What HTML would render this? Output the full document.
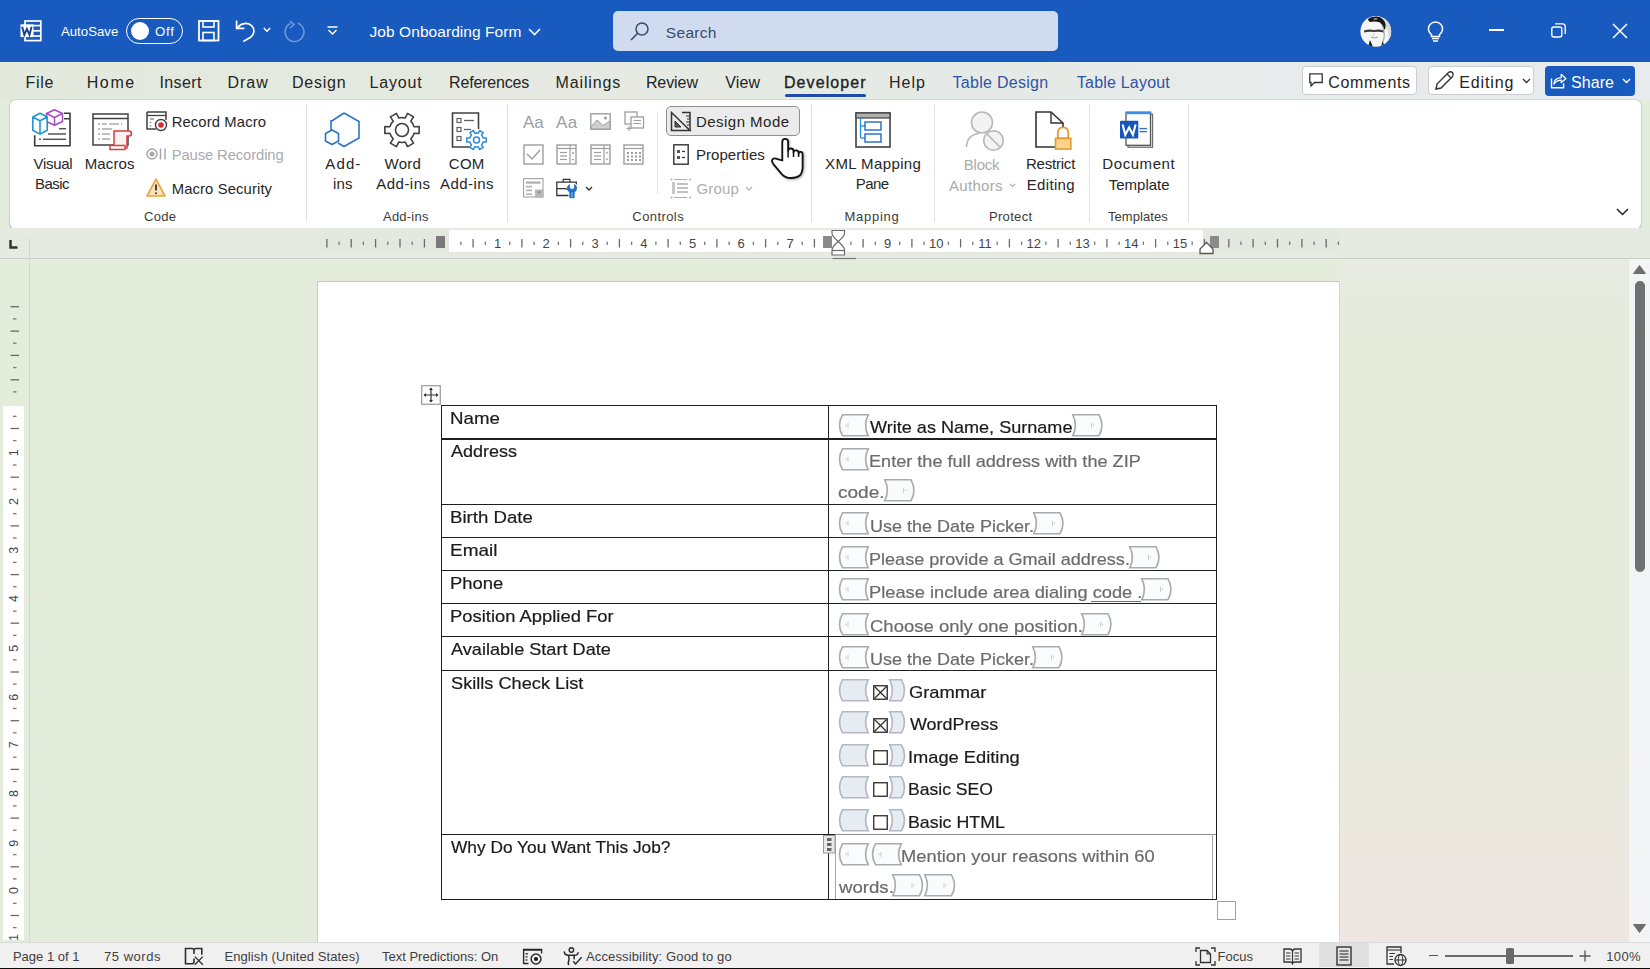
<!DOCTYPE html><html><head><meta charset="utf-8"><style>
html,body{margin:0;padding:0;width:1650px;height:969px;overflow:hidden;background:#E4ECDC;font-family:"Liberation Sans", sans-serif;}
.t{position:absolute;white-space:pre;line-height:1;font-family:"Liberation Sans", sans-serif;}
svg{overflow:visible}
</style></head><body>
<div style="position:absolute;left:0px;top:258px;width:1650px;height:684px;background:#E4ECDC;"></div><div style="position:absolute;left:1339px;top:258px;width:311px;height:684px;background:linear-gradient(180deg,#E8EBE3 0%,#E6EBDC 12%,#E6EBDB 50%,#E8E9DD 72%,#ECE7E0 88%,#EEE6E2 100%);"></div><div style="position:absolute;left:0px;top:0px;width:1650px;height:62px;background:#185ABD;"></div><svg style="position:absolute;left:20px;top:20px;" width="22" height="22" viewBox="0 0 22 22"><rect x="5" y="1" width="15.8" height="19.6" fill="none" stroke="#fff" stroke-width="1.7"/><line x1="13" y1="5.6" x2="20.8" y2="5.6" stroke="#fff" stroke-width="1.7"/><line x1="13" y1="10.8" x2="20.8" y2="10.8" stroke="#fff" stroke-width="1.7"/><line x1="13" y1="16" x2="20.8" y2="16" stroke="#fff" stroke-width="1.7"/><rect x="0.5" y="4.3" width="13" height="12.8" fill="#fff"/><path d="M2.2 6.8 L4.3 14.8 L6.9 8.8 L9.5 14.8 L11.6 6.8" fill="none" stroke="#1B3E8C" stroke-width="1.9" stroke-linejoin="miter"/></svg><div class="t" style="left:60.97px;top:25px;font-size:13.2px;color:#fff;letter-spacing:0.01px;">AutoSave</div><div style="position:absolute;left:125.5px;top:17.8px;width:55.5px;height:24.5px;border:1.8px solid #fff;border-radius:13px;"></div><div style="position:absolute;left:130.5px;top:22px;width:18px;height:18px;background:#fff;border-radius:50%;"></div><div class="t" style="left:155.07px;top:25px;font-size:13.2px;color:#fff;letter-spacing:0.768px;">Off</div><svg style="position:absolute;left:198px;top:20px;" width="22" height="22" viewBox="0 0 22 22"><rect x="1" y="1" width="19.5" height="19.5" fill="none" stroke="#fff" stroke-width="1.8"/><rect x="5" y="1" width="11" height="6" fill="none" stroke="#fff" stroke-width="1.6"/><rect x="5" y="12.5" width="11" height="8" fill="none" stroke="#fff" stroke-width="1.6"/></svg><svg style="position:absolute;left:235px;top:20px;" width="22" height="23" viewBox="0 0 22 23"><path d="M1.6 0.6 V8.4 H9.4" fill="none" stroke="#fff" stroke-width="1.7"/><path d="M2.2 8.2 C5.8 2.8 12.8 2 16.8 5.8 C20.5 9.5 19.2 13.8 16 17 L8.3 21.6" fill="none" stroke="#fff" stroke-width="1.7"/></svg><svg style="position:absolute;left:263px;top:27px;" width="8" height="6" viewBox="0 0 8 6"><path d="M0.8 1 L4 4.2 L7.2 1" fill="none" stroke="#fff" stroke-width="1.4"/></svg><svg style="position:absolute;left:283px;top:20px;" width="23" height="22" viewBox="0 0 23 22"><circle cx="11.5" cy="12" r="9.5" fill="none" stroke="#6E9BE0" stroke-width="1.6" stroke-dasharray="52 8" transform="rotate(-70 11.5 12)"/><path d="M7 1 L11 4.5 L7 8" fill="none" stroke="#6E9BE0" stroke-width="1.6"/></svg><svg style="position:absolute;left:327px;top:26px;" width="11" height="10" viewBox="0 0 11 10"><line x1="0.5" y1="1" x2="10.5" y2="1" stroke="#fff" stroke-width="1.5"/><path d="M1.5 4 L5.5 8 L9.5 4" fill="none" stroke="#fff" stroke-width="1.5"/></svg><div class="t" style="left:369.57px;top:24px;font-size:15.5px;color:#fff;letter-spacing:0.059px;">Job Onboarding Form</div><svg style="position:absolute;left:528px;top:28px;" width="13" height="8" viewBox="0 0 13 8"><path d="M1 1 L6.5 6.5 L12 1" fill="none" stroke="#fff" stroke-width="1.6"/></svg><div style="position:absolute;left:613px;top:11px;width:445px;height:40px;background:#D0DBEF;border-radius:5px;"></div><svg style="position:absolute;left:630px;top:22px;" width="20" height="19" viewBox="0 0 20 19"><circle cx="12" cy="7" r="6" fill="none" stroke="#3B4A66" stroke-width="1.5"/><line x1="7.5" y1="11.5" x2="1" y2="18" stroke="#3B4A66" stroke-width="1.6"/></svg><div class="t" style="left:665.80px;top:25px;font-size:15.5px;color:#3C4A6B;letter-spacing:0.314px;">Search</div><svg style="position:absolute;left:1360px;top:15.5px;filter:blur(0.35px)" width="32" height="31" viewBox="0 0 32 31"><defs><clipPath id="avc"><circle cx="15.8" cy="15.4" r="15.4"/></clipPath></defs><circle cx="15.8" cy="15.4" r="15.4" fill="#F7F7F7"/><g clip-path="url(#avc)"><path d="M24 8 Q30 14 28 26 L32 31 V0 H24 Z" fill="#D9D9DC"/><path d="M8 3 Q11 0 17 0.5 Q24 1.5 25.5 8 Q26 12 24.5 14 Q23 9 20 6.5 Q15 5 10 6 Q8 5 8 3 Z" fill="#161616"/><ellipse cx="15.5" cy="3" rx="2.2" ry="1.1" fill="#8a8a8a"/><path d="M4 14.5 Q9 12.8 14 14 Q19 13 24 14.5 V16.5 Q19 15.3 14 16 Q9 15.2 4 16.5 Z" fill="#3d3d3d"/><path d="M11 21 Q14 23 18 21" fill="none" stroke="#9a9a9a" stroke-width="1"/><path d="M14 17 L13 20" stroke="#bdbdbd" stroke-width="0.8"/><path d="M8 31 L10 24 L13 31 Z" fill="#1f1f1f"/><path d="M21 31 L22.5 25 L25 31 Z" fill="#2a2a2a"/><path d="M22 9 Q26 18 23 26" fill="none" stroke="#a5a5a5" stroke-width="1.2"/></g></svg><svg style="position:absolute;left:1427px;top:21px;" width="17" height="21" viewBox="0 0 17 21"><path d="M4.5 13.5 C1 11 0.5 6.5 3 3.5 C6 0.2 11 0.2 14 3.5 C16.5 6.5 16 11 12.5 13.5 V15.5 H4.5 Z" fill="none" stroke="#fff" stroke-width="1.5"/><line x1="5" y1="17.5" x2="12" y2="17.5" stroke="#fff" stroke-width="1.5"/><line x1="6" y1="20" x2="11" y2="20" stroke="#fff" stroke-width="1.5"/></svg><div style="position:absolute;left:1488.5px;top:29.2px;width:15px;height:1.8px;background:#fff;"></div><svg style="position:absolute;left:1551px;top:23px;" width="15" height="15" viewBox="0 0 15 15"><rect x="0.8" y="4" width="10" height="10" rx="2" fill="none" stroke="#fff" stroke-width="1.4"/><path d="M4 0.9 H11.5 Q14.2 0.9 14.2 3.6 V11" fill="none" stroke="#fff" stroke-width="1.4"/></svg><svg style="position:absolute;left:1612px;top:23px;" width="16" height="16" viewBox="0 0 16 16"><path d="M1 1 L15 15 M15 1 L1 15" stroke="#fff" stroke-width="1.5"/></svg><div style="position:absolute;left:0px;top:62px;width:1650px;height:38px;background:linear-gradient(90deg,#E3E9DC 0%,#E6EAE4 45%,#E7EBEE 100%);"></div><div class="t" style="left:25.38px;top:75px;font-size:16px;color:#242424;letter-spacing:0.78px;">File</div><div class="t" style="left:86.68px;top:75px;font-size:16px;color:#242424;letter-spacing:1.64px;">Home</div><div class="t" style="left:159.52px;top:75px;font-size:16px;color:#242424;letter-spacing:0.38px;">Insert</div><div class="t" style="left:227.38px;top:75px;font-size:16px;color:#242424;letter-spacing:1.007px;">Draw</div><div class="t" style="left:291.98px;top:75px;font-size:16px;color:#242424;letter-spacing:0.784px;">Design</div><div class="t" style="left:369.38px;top:75px;font-size:16px;color:#242424;letter-spacing:0.86px;">Layout</div><div class="t" style="left:449.08px;top:75px;font-size:16px;color:#242424;letter-spacing:-0.196px;">References</div><div class="t" style="left:555.48px;top:75px;font-size:16px;color:#242424;letter-spacing:0.886px;">Mailings</div><div class="t" style="left:645.88px;top:75px;font-size:16px;color:#242424;letter-spacing:-0.08px;">Review</div><div class="t" style="left:725.32px;top:75px;font-size:16px;color:#242424;letter-spacing:0.08px;">View</div><div class="t" style="left:783.98px;top:75px;font-size:16px;color:#1f1f1f;letter-spacing:1.08px;-webkit-text-stroke:0.35px #1f1f1f;">Developer</div><div style="position:absolute;left:785px;top:93.5px;width:81px;height:3px;background:#1F4CA8;border-radius:2px;"></div><div class="t" style="left:888.98px;top:75px;font-size:16px;color:#242424;letter-spacing:0.993px;">Help</div><div class="t" style="left:952.54px;top:75px;font-size:16px;color:#2F54A6;letter-spacing:0.289px;">Table Design</div><div class="t" style="left:1076.84px;top:75px;font-size:16px;color:#2F54A6;letter-spacing:0.205px;">Table Layout</div><div style="position:absolute;left:1302px;top:66px;width:115px;height:29px;background:#fff;border:1px solid #C9CDD0;border-radius:4px;box-sizing:border-box;"></div><svg style="position:absolute;left:1309px;top:73px;" width="14" height="15" viewBox="0 0 14 15"><path d="M0.8 0.8 H13.2 V9.5 H5.5 L2 13 V9.5 H0.8 Z" fill="none" stroke="#333" stroke-width="1.3"/></svg><div class="t" style="left:1328.20px;top:75px;font-size:16px;color:#242424;letter-spacing:0.643px;">Comments</div><div style="position:absolute;left:1428px;top:66px;width:106px;height:29px;background:#fff;border:1px solid #C9CDD0;border-radius:4px;box-sizing:border-box;"></div><svg style="position:absolute;left:1434px;top:70px;" width="21" height="21" viewBox="0 0 21 21"><path d="M2 19 L3 14 L14.5 2.5 Q16.5 0.8 18.5 2.5 Q20 4.5 18.5 6.5 L7 18 Z" fill="none" stroke="#333" stroke-width="1.4"/><line x1="13" y1="4" x2="17" y2="8" stroke="#333" stroke-width="1.3"/></svg><div class="t" style="left:1459.18px;top:75px;font-size:16px;color:#242424;letter-spacing:0.883px;">Editing</div><svg style="position:absolute;left:1521.5px;top:78px;" width="9" height="6" viewBox="0 0 9 6"><path d="M1 1 L4.5 4.5 L8 1" fill="none" stroke="#333" stroke-width="1.3"/></svg><div style="position:absolute;left:1545px;top:66px;width:90px;height:30px;background:#185ABD;border-radius:4px;"></div><svg style="position:absolute;left:1550px;top:73px;" width="17" height="16" viewBox="0 0 17 16"><path d="M1.5 5.5 V14.8 H13.6 V10.2" fill="none" stroke="#fff" stroke-width="1.4"/><path d="M3.8 11.2 Q4 5.2 11.2 4.6 V1.3 L15.9 5.8 L11.2 9.6 V7.2 Q6.6 7.2 3.8 11.2 Z" fill="none" stroke="#fff" stroke-width="1.25" stroke-linejoin="round"/></svg><div class="t" style="left:1571.08px;top:75px;font-size:16px;color:#fff;letter-spacing:0.03px;">Share</div><svg style="position:absolute;left:1621.5px;top:78px;" width="9" height="6" viewBox="0 0 9 6"><path d="M1 1 L4.5 4.5 L8 1" fill="none" stroke="#fff" stroke-width="1.4"/></svg><div style="position:absolute;left:10px;top:100px;width:1631px;height:129px;background:#fff;border-radius:6px;box-shadow:0 1px 1.5px rgba(0,0,0,0.22),0 0 0 1px rgba(0,0,0,0.07);"></div><div style="position:absolute;left:305.5px;top:104px;width:1px;height:118px;background:#E1E1E1;"></div><div style="position:absolute;left:506.5px;top:104px;width:1px;height:118px;background:#E1E1E1;"></div><div style="position:absolute;left:810.5px;top:104px;width:1px;height:118px;background:#E1E1E1;"></div><div style="position:absolute;left:934px;top:104px;width:1px;height:118px;background:#E1E1E1;"></div><div style="position:absolute;left:1088.5px;top:104px;width:1px;height:118px;background:#E1E1E1;"></div><div style="position:absolute;left:1188px;top:104px;width:1px;height:118px;background:#E1E1E1;"></div><div class="t" style="left:144.05px;top:210px;font-size:13px;color:#3b3b3b;letter-spacing:0.311px;">Code</div><div class="t" style="left:382.97px;top:210px;font-size:13px;color:#3b3b3b;letter-spacing:0.236px;">Add-ins</div><div class="t" style="left:632.35px;top:210px;font-size:13px;color:#3b3b3b;letter-spacing:0.411px;">Controls</div><div class="t" style="left:844.53px;top:210px;font-size:13px;color:#3b3b3b;letter-spacing:0.738px;">Mapping</div><div class="t" style="left:988.93px;top:210px;font-size:13px;color:#3b3b3b;letter-spacing:0.332px;">Protect</div><div class="t" style="left:1108.01px;top:210px;font-size:13px;color:#3b3b3b;letter-spacing:0.062px;">Templates</div><svg style="position:absolute;left:1615.5px;top:207.5px;" width="13" height="8" viewBox="0 0 13 8"><path d="M1 1 L6.5 6.5 L12 1" fill="none" stroke="#222" stroke-width="1.5"/></svg><svg style="position:absolute;left:32px;top:109px;" width="40" height="38" viewBox="0 0 40 38"><path d="M32 4.3 H38 V36.7 H2.7 V26.3" fill="none" stroke="#3a3a3a" stroke-width="1.6"/>
<line x1="32" y1="9.7" x2="38" y2="9.7" stroke="#3a3a3a" stroke-width="1.5"/>
<line x1="27" y1="19.7" x2="34" y2="19.7" stroke="#555" stroke-width="1.5"/>
<line x1="16" y1="25" x2="34" y2="25" stroke="#555" stroke-width="1.5"/>
<line x1="7" y1="30.3" x2="9" y2="30.3" stroke="#B03A7A" stroke-width="1.5"/>
<line x1="11" y1="30.3" x2="34" y2="30.3" stroke="#555" stroke-width="1.5"/>
<path d="M14.5 4.5 L22.5 0.8 L30.5 4.5 V12.5 L22.5 16.3 L14.5 12.5 Z M14.5 4.5 L22.5 8.5 L30.5 4.5 M22.5 8.5 V16.3" fill="#fff" stroke="#A94BBE" stroke-width="1.5" stroke-linejoin="round"/>
<path d="M0.8 8 L8 4.2 L15.2 8 V21.3 L8 25.1 L0.8 21.3 Z M0.8 8 L8 11.8 L15.2 8 M8 11.8 V25.1" fill="#fff" stroke="#1E95D6" stroke-width="1.6" stroke-linejoin="round"/></svg><div class="t" style="left:33.42px;top:156px;font-size:15px;color:#262626;letter-spacing:-0.257px;">Visual</div><div class="t" style="left:34.96px;top:176px;font-size:15px;color:#262626;letter-spacing:-0.556px;">Basic</div><svg style="position:absolute;left:92px;top:113px;" width="40" height="38" viewBox="0 0 40 38"><rect x="1" y="1" width="35" height="31" fill="none" stroke="#404040" stroke-width="1.5"/>
<line x1="1" y1="5.5" x2="36" y2="5.5" stroke="#404040" stroke-width="1.5"/>
<line x1="6" y1="11" x2="30" y2="11" stroke="#808080" stroke-width="1.2" stroke-dasharray="2 2 5 2 8 0"/>
<line x1="6" y1="16" x2="20" y2="16" stroke="#808080" stroke-width="1.2" stroke-dasharray="2 2 8 0"/>
<line x1="6" y1="21" x2="20" y2="21" stroke="#808080" stroke-width="1.2" stroke-dasharray="2 2 6 0"/>
<line x1="6" y1="26" x2="18" y2="26" stroke="#808080" stroke-width="1.2" stroke-dasharray="2 2 6 0"/>
<path d="M22 18 H37 Q39.5 18 39.5 20.5 Q39.5 23 37 23 H35 V35 H20 V32.5 H22 Z" fill="#FDF1F1" stroke="#D83B3B" stroke-width="1.5"/>
<path d="M18 32.5 H33 V36.5 H18 Z" fill="#fff" stroke="#D83B3B" stroke-width="1.4"/></svg><div class="t" style="left:84.76px;top:156px;font-size:15px;color:#262626;letter-spacing:0.12px;">Macros</div><svg style="position:absolute;left:146px;top:111px;" width="22" height="20" viewBox="0 0 22 20"><path d="M1 1 H20 V9" fill="none" stroke="#404040" stroke-width="1.5"/><path d="M1 1 V18 H10" fill="none" stroke="#404040" stroke-width="1.5"/><line x1="1" y1="4.5" x2="20" y2="4.5" stroke="#404040" stroke-width="1.3"/>
<line x1="4" y1="8" x2="8" y2="8" stroke="#808080" stroke-width="1.3"/><circle cx="4.5" cy="11.5" r="0.8" fill="#808080"/><circle cx="4.5" cy="15" r="0.8" fill="#808080"/>
<circle cx="15" cy="14" r="5.5" fill="#fff" stroke="#404040" stroke-width="1.4"/><circle cx="15" cy="14" r="2.8" fill="#D92B2B"/></svg><div class="t" style="left:171.68px;top:115px;font-size:14.8px;color:#262626;letter-spacing:0.124px;">Record Macro</div><svg style="position:absolute;left:146px;top:148px;" width="22" height="12" viewBox="0 0 22 12"><circle cx="6" cy="6" r="5" fill="none" stroke="#A8A8A8" stroke-width="1.5"/><circle cx="6" cy="6" r="2.5" fill="#A8A8A8"/><line x1="14.5" y1="0.5" x2="14.5" y2="11.5" stroke="#A8A8A8" stroke-width="1.5"/><line x1="19" y1="0.5" x2="19" y2="11.5" stroke="#A8A8A8" stroke-width="1.5"/></svg><div class="t" style="left:171.68px;top:148px;font-size:14.8px;color:#ABABAB;letter-spacing:-0.105px;">Pause Recording</div><svg style="position:absolute;left:146px;top:178px;" width="20" height="19" viewBox="0 0 20 19"><path d="M10 1.2 L19 18 H1 Z" fill="#FCE4B8" stroke="#E8A33D" stroke-width="1.6" stroke-linejoin="round"/><line x1="10" y1="6.5" x2="10" y2="12.5" stroke="#333" stroke-width="1.8"/><circle cx="10" cy="15.2" r="1" fill="#333"/></svg><div class="t" style="left:171.68px;top:182px;font-size:14.8px;color:#262626;letter-spacing:0.129px;">Macro Security</div><svg style="position:absolute;left:324px;top:112px;" width="38" height="36" viewBox="0 0 38 36"><path d="M20 1 L35 9.5 V26 L20 34.5 L14 31" fill="none" stroke="#2E73C6" stroke-width="1.6"/><path d="M7 8 L7 18" fill="none" stroke="#2E73C6" stroke-width="1.6"/><path d="M7 9.5 L20 1" fill="none" stroke="#2E73C6" stroke-width="1.6"/>
<path d="M8 18 L14.5 21.5 V29 L8 32.5 L1.5 29 V21.5 Z" fill="none" stroke="#2E73C6" stroke-width="1.6"/></svg><div class="t" style="left:325.36px;top:156px;font-size:15px;color:#262626;letter-spacing:1.096px;">Add-</div><div class="t" style="left:332.99px;top:176px;font-size:15px;color:#262626;letter-spacing:0.188px;">ins</div><svg style="position:absolute;left:383px;top:112px;" width="38" height="36" viewBox="0 0 38 36"><path d="M19.00 5.50 L22.24 5.93 L24.58 1.41 L30.57 4.87 L27.84 9.16 L29.83 11.75 L31.07 14.76 L36.15 14.54 L36.15 21.46 L31.07 21.24 L29.83 24.25 L27.84 26.84 L30.57 31.13 L24.58 34.59 L22.24 30.07 L19.00 30.50 L15.76 30.07 L13.42 34.59 L7.43 31.13 L10.16 26.84 L8.17 24.25 L6.93 21.24 L1.85 21.46 L1.85 14.54 L6.93 14.76 L8.17 11.75 L10.16 9.16 L7.43 4.87 L13.42 1.41 L15.76 5.93 Z" fill="none" stroke="#404040" stroke-width="1.6" stroke-linejoin="round"/><circle cx="19" cy="18" r="6.5" fill="none" stroke="#404040" stroke-width="1.6"/></svg><div class="t" style="left:384.43px;top:156px;font-size:15px;color:#262626;letter-spacing:0.321px;">Word</div><div class="t" style="left:376.36px;top:176px;font-size:15px;color:#262626;letter-spacing:0.452px;">Add-ins</div><svg style="position:absolute;left:451px;top:112px;" width="37" height="38" viewBox="0 0 37 38"><path d="M19 35 H1.5 V1 H27.5 V17" fill="none" stroke="#404040" stroke-width="1.6"/>
<rect x="6" y="6.5" width="4" height="4" fill="none" stroke="#606060" stroke-width="1.2"/><line x1="13" y1="8.5" x2="23" y2="8.5" stroke="#606060" stroke-width="1.3"/>
<rect x="6" y="15.5" width="4" height="4" fill="none" stroke="#606060" stroke-width="1.2"/><line x1="13" y1="17.5" x2="20" y2="17.5" stroke="#606060" stroke-width="1.3"/>
<rect x="6" y="24.5" width="4" height="4" fill="none" stroke="#606060" stroke-width="1.2"/>
<path d="M25.50 21.00 L27.24 21.22 L28.59 18.49 L32.19 20.57 L30.50 23.10 L31.56 24.50 L32.24 26.12 L35.28 25.92 L35.28 30.08 L32.24 29.88 L31.56 31.50 L30.50 32.90 L32.19 35.43 L28.59 37.51 L27.24 34.78 L25.50 35.00 L23.76 34.78 L22.41 37.51 L18.81 35.43 L20.50 32.90 L19.44 31.50 L18.76 29.88 L15.72 30.08 L15.72 25.92 L18.76 26.12 L19.44 24.50 L20.50 23.10 L18.81 20.57 L22.41 18.49 L23.76 21.22 Z" fill="#fff" stroke="#2E8BD8" stroke-width="1.5" stroke-linejoin="round"/><circle cx="25.5" cy="28" r="3" fill="none" stroke="#2E8BD8" stroke-width="1.5"/></svg><div class="t" style="left:448.85px;top:156px;font-size:15px;color:#262626;letter-spacing:0.2px;">COM</div><div class="t" style="left:439.96px;top:176px;font-size:15px;color:#262626;letter-spacing:0.452px;">Add-ins</div><div class="t" style="left:523.00px;top:114px;font-size:17px;color:#9E9E9E;font-family:"Liberation Sans";">Aa</div><div class="t" style="left:556.00px;top:114px;font-size:17px;color:#9E9E9E;letter-spacing:0.5px;">Aa</div><svg style="position:absolute;left:590px;top:113px;" width="21" height="17" viewBox="0 0 21 17"><rect x="0.8" y="0.8" width="19.4" height="15.4" fill="none" stroke="#9E9E9E" stroke-width="1.4"/><path d="M1 14 L7 7 L13 12.5 L20 8 V16 H1 Z" fill="#D0D0D0" stroke="#9E9E9E" stroke-width="1"/><circle cx="15.5" cy="5" r="1.5" fill="#9E9E9E"/></svg><svg style="position:absolute;left:624px;top:111px;" width="21" height="21" viewBox="0 0 21 21"><rect x="1" y="1" width="12" height="12" fill="none" stroke="#9E9E9E" stroke-width="1.3"/><rect x="7" y="6" width="12.5" height="11" fill="#fff" stroke="#9E9E9E" stroke-width="1.3"/><line x1="9.5" y1="9.5" x2="17" y2="9.5" stroke="#9E9E9E" stroke-width="1.1"/><line x1="9.5" y1="12.5" x2="17" y2="12.5" stroke="#9E9E9E" stroke-width="1.1"/><line x1="5" y1="15" x2="5" y2="20" stroke="#9E9E9E" stroke-width="1.1"/><line x1="2.5" y1="17.5" x2="7.5" y2="17.5" stroke="#9E9E9E" stroke-width="1.1"/></svg><svg style="position:absolute;left:523px;top:144px;" width="21" height="21" viewBox="0 0 21 21"><rect x="1" y="1" width="19" height="19" fill="none" stroke="#9E9E9E" stroke-width="1.4"/><path d="M4 10 L9 15 L17 6" fill="none" stroke="#9E9E9E" stroke-width="1.4"/></svg><svg style="position:absolute;left:556px;top:144px;" width="21" height="21" viewBox="0 0 21 21"><rect x="1" y="1" width="19" height="19" fill="none" stroke="#9E9E9E" stroke-width="1.4"/><line x1="1" y1="4.5" x2="20" y2="4.5" stroke="#9E9E9E" stroke-width="1.2"/><line x1="14" y1="1" x2="14" y2="20" stroke="#9E9E9E" stroke-width="1.2"/><line x1="4" y1="8.5" x2="11" y2="8.5" stroke="#9E9E9E" stroke-width="1.2"/><line x1="4" y1="12" x2="11" y2="12" stroke="#9E9E9E" stroke-width="1.2"/><line x1="4" y1="15.5" x2="11" y2="15.5" stroke="#9E9E9E" stroke-width="1.2"/><circle cx="17" cy="9" r="1" fill="#9E9E9E"/><path d="M15.5 15 L17 16.8 L18.5 15" fill="#9E9E9E"/></svg><svg style="position:absolute;left:590px;top:144px;" width="21" height="21" viewBox="0 0 21 21"><rect x="1" y="1" width="19" height="19" fill="none" stroke="#9E9E9E" stroke-width="1.4"/><line x1="1" y1="4.5" x2="20" y2="4.5" stroke="#9E9E9E" stroke-width="1.2"/><line x1="14" y1="1" x2="14" y2="20" stroke="#9E9E9E" stroke-width="1.2"/><line x1="4" y1="8.5" x2="11" y2="8.5" stroke="#9E9E9E" stroke-width="1.2"/><line x1="4" y1="12" x2="11" y2="12" stroke="#9E9E9E" stroke-width="1.2"/><line x1="4" y1="15.5" x2="11" y2="15.5" stroke="#9E9E9E" stroke-width="1.2"/><path d="M15.5 9.5 L17 7.5 L18.5 9.5 Z" fill="#9E9E9E"/><path d="M15.5 14.5 L17 16.5 L18.5 14.5 Z" fill="#9E9E9E"/></svg><svg style="position:absolute;left:623px;top:144px;" width="21" height="21" viewBox="0 0 21 21"><rect x="1" y="1" width="19" height="19" fill="none" stroke="#9E9E9E" stroke-width="1.4"/><line x1="1" y1="4.5" x2="20" y2="4.5" stroke="#9E9E9E" stroke-width="1.2"/><rect x="4" y="8" width="2" height="2" fill="#9E9E9E"/><rect x="8" y="8" width="2" height="2" fill="#9E9E9E"/><rect x="12" y="8" width="2" height="2" fill="#9E9E9E"/><rect x="16" y="8" width="2" height="2" fill="#9E9E9E"/><rect x="4" y="11.5" width="2" height="2" fill="#9E9E9E"/><rect x="8" y="11.5" width="2" height="2" fill="#9E9E9E"/><rect x="12" y="11.5" width="2" height="2" fill="#9E9E9E"/><rect x="16" y="11.5" width="2" height="2" fill="#9E9E9E"/><rect x="4" y="15" width="2" height="2" fill="#9E9E9E"/><rect x="8" y="15" width="2" height="2" fill="#9E9E9E"/><rect x="12" y="15" width="2" height="2" fill="#9E9E9E"/><rect x="16" y="15" width="2" height="2" fill="#9E9E9E"/></svg><svg style="position:absolute;left:523px;top:178px;" width="21" height="21" viewBox="0 0 21 21"><rect x="0.6" y="0.6" width="19.4" height="18.4" fill="none" stroke="#A3A3A3" stroke-width="1.1"/><rect x="3" y="3.6" width="14.5" height="2" fill="#A8A8A8"/><rect x="3" y="7.8" width="6" height="1.6" fill="#B0B0B0"/><rect x="3" y="11.6" width="6" height="1.6" fill="#B0B0B0"/><rect x="3" y="15.4" width="6" height="1.6" fill="#B0B0B0"/><rect x="12" y="11.5" width="8.4" height="8" fill="#B8B8B8"/><path d="M14 13.5 L16.2 16 L18.4 13.5 Z" fill="#8E8E8E"/></svg><svg style="position:absolute;left:556px;top:178px;" width="22" height="21" viewBox="0 0 22 21"><path d="M12.5 17.5 H0.8 V4.2 H20.3 V6.5" fill="none" stroke="#333" stroke-width="1.3"/><path d="M7.2 4.2 V1.3 H13.9 V4.2" fill="none" stroke="#333" stroke-width="1.2"/><path d="M0.8 10.6 H9.5 Q11 10.6 11.3 12" fill="none" stroke="#333" stroke-width="1.2"/><path d="M13.6 6.6 Q11.3 7.6 11.3 10.3 Q11.3 13 13.8 14 V19.8 H18.2 V14 Q20.7 13 20.7 10.3 Q20.7 7.6 18.4 6.6 V10.3 L16 11.6 L13.6 10.3 Z" fill="#1E73C9" stroke="#1A66B5" stroke-width="0.7" stroke-linejoin="round"/><rect x="15.3" y="14.3" width="1.4" height="4.6" fill="#6FB5F0"/></svg><svg style="position:absolute;left:585px;top:186px;" width="8" height="6" viewBox="0 0 8 6"><path d="M1 1 L4 4 L7 1" fill="none" stroke="#333" stroke-width="1.4"/></svg><div style="position:absolute;left:657px;top:112px;width:1px;height:82px;background:#E1E1E1;"></div><div style="position:absolute;left:666px;top:106px;width:134px;height:30px;background:#EBEBEB;border:1px solid #8F8F8F;border-radius:5px;box-sizing:border-box;"></div><svg style="position:absolute;left:670px;top:111px;" width="22" height="21" viewBox="0 0 22 21"><path d="M1.5 1.5 L20 19.5 H1.5 Z" fill="none" stroke="#333" stroke-width="1.5"/><path d="M5 10 L11 16 H5 Z" fill="#555" stroke="#333" stroke-width="1"/><path d="M12 1.5 H20 V19.5" fill="none" stroke="#333" stroke-width="1.5"/><line x1="16" y1="5" x2="20" y2="5" stroke="#333" stroke-width="1"/><line x1="17" y1="8" x2="20" y2="8" stroke="#333" stroke-width="1"/><line x1="16" y1="11" x2="20" y2="11" stroke="#333" stroke-width="1"/><line x1="17" y1="14" x2="20" y2="14" stroke="#333" stroke-width="1"/></svg><div class="t" style="left:695.96px;top:114px;font-size:15px;color:#262626;letter-spacing:0.473px;">Design Mode</div><svg style="position:absolute;left:673px;top:144px;" width="16" height="21" viewBox="0 0 16 21"><rect x="0.8" y="0.8" width="14.4" height="19.4" fill="none" stroke="#333" stroke-width="1.4"/><rect x="4" y="6" width="3" height="3" fill="#555"/><rect x="4" y="12" width="3" height="3" fill="#555"/><line x1="9" y1="7.5" x2="12" y2="7.5" stroke="#333" stroke-width="1.2"/><line x1="9" y1="13.5" x2="12" y2="13.5" stroke="#333" stroke-width="1.2"/></svg><div class="t" style="left:695.96px;top:147px;font-size:15px;color:#262626;letter-spacing:0.056px;">Properties</div><svg style="position:absolute;left:670px;top:178px;" width="22" height="21" viewBox="0 0 22 21"><circle cx="1.5" cy="1.5" r="1" fill="#B0B0B0"/><circle cx="20" cy="1.5" r="1" fill="#B0B0B0"/><circle cx="1.5" cy="19.5" r="1" fill="#B0B0B0"/><circle cx="20" cy="19.5" r="1" fill="#B0B0B0"/><line x1="4" y1="1.5" x2="17" y2="1.5" stroke="#B0B0B0" stroke-width="1"/><line x1="4" y1="19.5" x2="17" y2="19.5" stroke="#B0B0B0" stroke-width="1"/><rect x="2" y="4" width="3" height="12" fill="#C8C8C8"/><line x1="7" y1="6" x2="18" y2="6" stroke="#A8A8A8" stroke-width="1.4"/><line x1="7" y1="10" x2="18" y2="10" stroke="#A8A8A8" stroke-width="1.4"/><line x1="7" y1="14" x2="18" y2="14" stroke="#A8A8A8" stroke-width="1.4"/></svg><div class="t" style="left:696.45px;top:181px;font-size:15px;color:#B0B0B0;letter-spacing:0.172px;">Group</div><svg style="position:absolute;left:745px;top:186px;" width="8" height="6" viewBox="0 0 8 6"><path d="M1 1 L4 4 L7 1" fill="none" stroke="#B8B8B8" stroke-width="1.3"/></svg><svg style="position:absolute;left:771px;top:138px;" width="34" height="42" viewBox="0 0 34 42"><path d="M11.3 22.5 V3.8 Q11.3 0.9 14.2 0.9 Q17.1 0.9 17.1 3.8 V12.8 Q17.3 10.5 19.8 10.5 Q22.3 10.5 22.5 13 V14.5 Q22.7 12.4 25.1 12.4 Q27.5 12.4 27.6 14.8 V16 Q27.9 13.7 30 13.9 Q31.6 14.1 31.6 16.5 V28.5 Q31.6 35 28.3 37.8 Q25.5 40 20 40 Q14.5 40 11 36.3 L2.2 25.8 Q0.2 23.2 1.6 21.4 Q3.5 19.5 6.5 21.2 Z" fill="#fff" stroke="#111" stroke-width="1.8" stroke-linejoin="round" style="filter:drop-shadow(1px 1.5px 1.2px rgba(0,0,0,0.35))"/><line x1="17.1" y1="12.8" x2="17.1" y2="19.5" stroke="#111" stroke-width="1.5"/><line x1="22.5" y1="14.5" x2="22.5" y2="19" stroke="#111" stroke-width="1.5"/><line x1="27.6" y1="16" x2="27.6" y2="19" stroke="#111" stroke-width="1.5"/></svg><svg style="position:absolute;left:855px;top:112px;" width="36" height="36" viewBox="0 0 36 36"><rect x="1" y="1" width="34" height="34" fill="#fff" stroke="#404040" stroke-width="1.6"/><rect x="1" y="1" width="34" height="5" fill="#B0B0B0" stroke="#404040" stroke-width="1.2"/><line x1="5.5" y1="6" x2="5.5" y2="26" stroke="#1E8FE0" stroke-width="1.3"/><line x1="5.5" y1="14" x2="10" y2="14" stroke="#1E8FE0" stroke-width="1.3"/><line x1="5.5" y1="26" x2="10" y2="26" stroke="#1E8FE0" stroke-width="1.3"/><rect x="10" y="10" width="16" height="8" fill="none" stroke="#2E73C6" stroke-width="1.5"/><rect x="10" y="22" width="16" height="8" fill="none" stroke="#2E73C6" stroke-width="1.5"/></svg><div class="t" style="left:825.06px;top:156px;font-size:15px;color:#262626;letter-spacing:0.389px;">XML Mapping</div><div class="t" style="left:855.76px;top:176px;font-size:15px;color:#262626;letter-spacing:-0.55px;">Pane</div><svg style="position:absolute;left:965px;top:111px;" width="40" height="40" viewBox="0 0 40 40"><circle cx="17" cy="11.5" r="10.5" fill="#F3F3F3" stroke="#B8B8B8" stroke-width="1.6"/><path d="M1.5 36 Q2 24 14 22.5" fill="none" stroke="#B8B8B8" stroke-width="1.6"/><circle cx="28.5" cy="29.5" r="9.8" fill="#F3F3F3" stroke="#B8B8B8" stroke-width="1.6"/><line x1="22" y1="23" x2="35" y2="36" stroke="#B8B8B8" stroke-width="1.6"/></svg><div class="t" style="left:963.76px;top:157px;font-size:15px;color:#ABABAB;letter-spacing:-0.209px;">Block</div><div class="t" style="left:948.96px;top:178px;font-size:15px;color:#ABABAB;letter-spacing:0.308px;">Authors</div><svg style="position:absolute;left:1009px;top:183px;" width="7" height="5" viewBox="0 0 7 5"><path d="M0.8 0.8 L3.5 3.5 L6.2 0.8" fill="none" stroke="#B0B0B0" stroke-width="1.2"/></svg><svg style="position:absolute;left:1035px;top:111px;" width="37" height="40" viewBox="0 0 37 40"><path d="M1 1 H16 L28 12 V36 H1 Z" fill="#fff" stroke="#333" stroke-width="1.6"/><path d="M16 1 V12 H28" fill="none" stroke="#333" stroke-width="1.4"/><path d="M22.8 27.5 V22 Q22.8 16.4 28 16.4 Q33.3 16.4 33.3 22 V27.5 Z" fill="#fff" stroke="#E39A2F" stroke-width="1.8"/><rect x="20.5" y="27.3" width="15.3" height="10.8" fill="#FBD38A" stroke="#E39A2F" stroke-width="1.6"/></svg><div class="t" style="left:1025.96px;top:156px;font-size:15px;color:#262626;letter-spacing:-0.214px;">Restrict</div><div class="t" style="left:1026.76px;top:177px;font-size:15px;color:#262626;letter-spacing:0.335px;">Editing</div><svg style="position:absolute;left:1119px;top:111px;" width="35" height="38" viewBox="0 0 35 38"><rect x="9" y="3.2" width="24.5" height="33" fill="#fff" stroke="#6C6C6C" stroke-width="1.3"/><rect x="7" y="1.3" width="24.5" height="33" fill="#fff" stroke="#555" stroke-width="1.3"/><rect x="7" y="0.6" width="25.3" height="2.6" fill="#3D8CE8"/><line x1="20.5" y1="17.6" x2="28" y2="17.6" stroke="#3B6FC2" stroke-width="1.4"/><line x1="20.5" y1="20.6" x2="28" y2="20.6" stroke="#3B6FC2" stroke-width="1.4"/><rect x="1" y="9.8" width="18.3" height="17.6" rx="1" fill="#1756B8"/><path d="M3.6 13.4 L6.3 23.8 L10.1 16.6 L13.9 23.8 L16.6 13.4" fill="none" stroke="#fff" stroke-width="2.1" stroke-linejoin="miter"/></svg><div class="t" style="left:1102.36px;top:156px;font-size:15px;color:#262626;letter-spacing:0.555px;">Document</div><div class="t" style="left:1108.66px;top:177px;font-size:15px;color:#262626;letter-spacing:0.016px;">Template</div><div style="position:absolute;left:0px;top:228px;width:1650px;height:30px;background:#E6EBE2;"></div><div style="position:absolute;left:0px;top:258px;width:1650px;height:1px;background:#C9CEC4;"></div><div style="position:absolute;left:29px;top:238px;width:1px;height:704px;background:#D2D8CC;"></div><div style="position:absolute;left:320px;top:231px;width:1021px;height:22px;background:#E4E8E0;"></div><div style="position:absolute;left:449px;top:230px;width:754px;height:22px;background:#fff;"></div><svg style="position:absolute;left:9px;top:240px;" width="9" height="9" viewBox="0 0 9 9"><path d="M1.5 0 V7.5 H8.5" fill="none" stroke="#333" stroke-width="2.5"/></svg><svg style="position:absolute;left:0;top:0" width="1650" height="260"><line x1="326.9" y1="239" x2="326.9" y2="247.5" stroke="#6a6a6a" stroke-width="1.3"/><line x1="339.1" y1="241.5" x2="339.1" y2="245" stroke="#7a7a7a" stroke-width="1.3"/><line x1="351.2" y1="239" x2="351.2" y2="247.5" stroke="#6a6a6a" stroke-width="1.3"/><line x1="363.4" y1="241.5" x2="363.4" y2="245" stroke="#7a7a7a" stroke-width="1.3"/><line x1="375.6" y1="239" x2="375.6" y2="247.5" stroke="#6a6a6a" stroke-width="1.3"/><line x1="387.8" y1="241.5" x2="387.8" y2="245" stroke="#7a7a7a" stroke-width="1.3"/><line x1="400.0" y1="239" x2="400.0" y2="247.5" stroke="#6a6a6a" stroke-width="1.3"/><line x1="412.2" y1="241.5" x2="412.2" y2="245" stroke="#7a7a7a" stroke-width="1.3"/><line x1="424.4" y1="239" x2="424.4" y2="247.5" stroke="#6a6a6a" stroke-width="1.3"/><line x1="436.6" y1="241.5" x2="436.6" y2="245" stroke="#7a7a7a" stroke-width="1.3"/><line x1="460.9" y1="241.5" x2="460.9" y2="245" stroke="#7a7a7a" stroke-width="1.3"/><line x1="473.1" y1="239" x2="473.1" y2="247.5" stroke="#6a6a6a" stroke-width="1.3"/><line x1="485.3" y1="241.5" x2="485.3" y2="245" stroke="#7a7a7a" stroke-width="1.3"/><text x="497.5" y="248" font-family="Liberation Sans" font-size="13" fill="#454545" text-anchor="middle">1</text><line x1="509.7" y1="241.5" x2="509.7" y2="245" stroke="#7a7a7a" stroke-width="1.3"/><line x1="521.9" y1="239" x2="521.9" y2="247.5" stroke="#6a6a6a" stroke-width="1.3"/><line x1="534.1" y1="241.5" x2="534.1" y2="245" stroke="#7a7a7a" stroke-width="1.3"/><text x="546.2" y="248" font-family="Liberation Sans" font-size="13" fill="#454545" text-anchor="middle">2</text><line x1="558.4" y1="241.5" x2="558.4" y2="245" stroke="#7a7a7a" stroke-width="1.3"/><line x1="570.6" y1="239" x2="570.6" y2="247.5" stroke="#6a6a6a" stroke-width="1.3"/><line x1="582.8" y1="241.5" x2="582.8" y2="245" stroke="#7a7a7a" stroke-width="1.3"/><text x="595.0" y="248" font-family="Liberation Sans" font-size="13" fill="#454545" text-anchor="middle">3</text><line x1="607.2" y1="241.5" x2="607.2" y2="245" stroke="#7a7a7a" stroke-width="1.3"/><line x1="619.4" y1="239" x2="619.4" y2="247.5" stroke="#6a6a6a" stroke-width="1.3"/><line x1="631.6" y1="241.5" x2="631.6" y2="245" stroke="#7a7a7a" stroke-width="1.3"/><text x="643.8" y="248" font-family="Liberation Sans" font-size="13" fill="#454545" text-anchor="middle">4</text><line x1="655.9" y1="241.5" x2="655.9" y2="245" stroke="#7a7a7a" stroke-width="1.3"/><line x1="668.1" y1="239" x2="668.1" y2="247.5" stroke="#6a6a6a" stroke-width="1.3"/><line x1="680.3" y1="241.5" x2="680.3" y2="245" stroke="#7a7a7a" stroke-width="1.3"/><text x="692.5" y="248" font-family="Liberation Sans" font-size="13" fill="#454545" text-anchor="middle">5</text><line x1="704.7" y1="241.5" x2="704.7" y2="245" stroke="#7a7a7a" stroke-width="1.3"/><line x1="716.9" y1="239" x2="716.9" y2="247.5" stroke="#6a6a6a" stroke-width="1.3"/><line x1="729.1" y1="241.5" x2="729.1" y2="245" stroke="#7a7a7a" stroke-width="1.3"/><text x="741.2" y="248" font-family="Liberation Sans" font-size="13" fill="#454545" text-anchor="middle">6</text><line x1="753.4" y1="241.5" x2="753.4" y2="245" stroke="#7a7a7a" stroke-width="1.3"/><line x1="765.6" y1="239" x2="765.6" y2="247.5" stroke="#6a6a6a" stroke-width="1.3"/><line x1="777.8" y1="241.5" x2="777.8" y2="245" stroke="#7a7a7a" stroke-width="1.3"/><text x="790.0" y="248" font-family="Liberation Sans" font-size="13" fill="#454545" text-anchor="middle">7</text><line x1="802.2" y1="241.5" x2="802.2" y2="245" stroke="#7a7a7a" stroke-width="1.3"/><line x1="814.4" y1="239" x2="814.4" y2="247.5" stroke="#6a6a6a" stroke-width="1.3"/><line x1="826.6" y1="241.5" x2="826.6" y2="245" stroke="#7a7a7a" stroke-width="1.3"/><line x1="850.9" y1="241.5" x2="850.9" y2="245" stroke="#7a7a7a" stroke-width="1.3"/><line x1="863.1" y1="239" x2="863.1" y2="247.5" stroke="#6a6a6a" stroke-width="1.3"/><line x1="875.3" y1="241.5" x2="875.3" y2="245" stroke="#7a7a7a" stroke-width="1.3"/><text x="887.5" y="248" font-family="Liberation Sans" font-size="13" fill="#454545" text-anchor="middle">9</text><line x1="899.7" y1="241.5" x2="899.7" y2="245" stroke="#7a7a7a" stroke-width="1.3"/><line x1="911.9" y1="239" x2="911.9" y2="247.5" stroke="#6a6a6a" stroke-width="1.3"/><line x1="924.1" y1="241.5" x2="924.1" y2="245" stroke="#7a7a7a" stroke-width="1.3"/><text x="936.2" y="248" font-family="Liberation Sans" font-size="13" fill="#454545" text-anchor="middle">10</text><line x1="948.4" y1="241.5" x2="948.4" y2="245" stroke="#7a7a7a" stroke-width="1.3"/><line x1="960.6" y1="239" x2="960.6" y2="247.5" stroke="#6a6a6a" stroke-width="1.3"/><line x1="972.8" y1="241.5" x2="972.8" y2="245" stroke="#7a7a7a" stroke-width="1.3"/><text x="985.0" y="248" font-family="Liberation Sans" font-size="13" fill="#454545" text-anchor="middle">11</text><line x1="997.2" y1="241.5" x2="997.2" y2="245" stroke="#7a7a7a" stroke-width="1.3"/><line x1="1009.4" y1="239" x2="1009.4" y2="247.5" stroke="#6a6a6a" stroke-width="1.3"/><line x1="1021.6" y1="241.5" x2="1021.6" y2="245" stroke="#7a7a7a" stroke-width="1.3"/><text x="1033.8" y="248" font-family="Liberation Sans" font-size="13" fill="#454545" text-anchor="middle">12</text><line x1="1045.9" y1="241.5" x2="1045.9" y2="245" stroke="#7a7a7a" stroke-width="1.3"/><line x1="1058.1" y1="239" x2="1058.1" y2="247.5" stroke="#6a6a6a" stroke-width="1.3"/><line x1="1070.3" y1="241.5" x2="1070.3" y2="245" stroke="#7a7a7a" stroke-width="1.3"/><text x="1082.5" y="248" font-family="Liberation Sans" font-size="13" fill="#454545" text-anchor="middle">13</text><line x1="1094.7" y1="241.5" x2="1094.7" y2="245" stroke="#7a7a7a" stroke-width="1.3"/><line x1="1106.9" y1="239" x2="1106.9" y2="247.5" stroke="#6a6a6a" stroke-width="1.3"/><line x1="1119.1" y1="241.5" x2="1119.1" y2="245" stroke="#7a7a7a" stroke-width="1.3"/><text x="1131.2" y="248" font-family="Liberation Sans" font-size="13" fill="#454545" text-anchor="middle">14</text><line x1="1143.4" y1="241.5" x2="1143.4" y2="245" stroke="#7a7a7a" stroke-width="1.3"/><line x1="1155.6" y1="239" x2="1155.6" y2="247.5" stroke="#6a6a6a" stroke-width="1.3"/><line x1="1167.8" y1="241.5" x2="1167.8" y2="245" stroke="#7a7a7a" stroke-width="1.3"/><text x="1180.0" y="248" font-family="Liberation Sans" font-size="13" fill="#454545" text-anchor="middle">15</text><line x1="1192.2" y1="241.5" x2="1192.2" y2="245" stroke="#7a7a7a" stroke-width="1.3"/><line x1="1204.4" y1="239" x2="1204.4" y2="247.5" stroke="#6a6a6a" stroke-width="1.3"/><line x1="1216.6" y1="241.5" x2="1216.6" y2="245" stroke="#7a7a7a" stroke-width="1.3"/><line x1="1228.8" y1="239" x2="1228.8" y2="247.5" stroke="#6a6a6a" stroke-width="1.3"/><line x1="1240.9" y1="241.5" x2="1240.9" y2="245" stroke="#7a7a7a" stroke-width="1.3"/><line x1="1253.1" y1="239" x2="1253.1" y2="247.5" stroke="#6a6a6a" stroke-width="1.3"/><line x1="1265.3" y1="241.5" x2="1265.3" y2="245" stroke="#7a7a7a" stroke-width="1.3"/><line x1="1277.5" y1="239" x2="1277.5" y2="247.5" stroke="#6a6a6a" stroke-width="1.3"/><line x1="1289.7" y1="241.5" x2="1289.7" y2="245" stroke="#7a7a7a" stroke-width="1.3"/><line x1="1301.9" y1="239" x2="1301.9" y2="247.5" stroke="#6a6a6a" stroke-width="1.3"/><line x1="1314.1" y1="241.5" x2="1314.1" y2="245" stroke="#7a7a7a" stroke-width="1.3"/><line x1="1326.2" y1="239" x2="1326.2" y2="247.5" stroke="#6a6a6a" stroke-width="1.3"/><line x1="1338.4" y1="241.5" x2="1338.4" y2="245" stroke="#7a7a7a" stroke-width="1.3"/></svg><div style="position:absolute;left:436px;top:236px;width:9px;height:12px;background:#7A7A7A;"></div><div style="position:absolute;left:823px;top:236px;width:9px;height:11.5px;background:#8A8A8A;"></div><svg style="position:absolute;left:831px;top:229px;" width="15" height="31" viewBox="0 0 15 31"><path d="M1 1.5 H13.5 V4.5 Q13.5 7 7.2 12.5 Q13.5 18 13.5 21 V26 H1 V21 Q1 18 7.2 12.5 Q1 7 1 4.5 Z" fill="#fff" stroke="#6a6a6a" stroke-width="1.2"/><line x1="1" y1="21.5" x2="13.5" y2="21.5" stroke="#6a6a6a" stroke-width="1.2"/><line x1="1.5" y1="29.5" x2="25" y2="29.5" stroke="#777" stroke-width="1.2"/></svg><div style="position:absolute;left:1210px;top:236px;width:9px;height:12px;background:#8A8A8A;"></div><svg style="position:absolute;left:1199px;top:241px;" width="16" height="14" viewBox="0 0 16 14"><path d="M1 12.5 V8 L7.5 1.5 L14 8 V12.5 Z" fill="#fff" stroke="#555" stroke-width="1.3"/></svg><div style="position:absolute;left:3px;top:406px;width:21px;height:534px;background:#fff;"></div><svg style="position:absolute;left:0;top:0" width="40" height="969"><line x1="10.5" y1="306.7" x2="19" y2="306.7" stroke="#6a6a6a" stroke-width="1.3"/><line x1="13" y1="318.9" x2="16.5" y2="318.9" stroke="#7a7a7a" stroke-width="1.3"/><line x1="10.5" y1="331.1" x2="19" y2="331.1" stroke="#6a6a6a" stroke-width="1.3"/><line x1="13" y1="343.2" x2="16.5" y2="343.2" stroke="#7a7a7a" stroke-width="1.3"/><line x1="10.5" y1="355.4" x2="19" y2="355.4" stroke="#6a6a6a" stroke-width="1.3"/><line x1="13" y1="367.6" x2="16.5" y2="367.6" stroke="#7a7a7a" stroke-width="1.3"/><line x1="10.5" y1="379.8" x2="19" y2="379.8" stroke="#6a6a6a" stroke-width="1.3"/><line x1="13" y1="391.9" x2="16.5" y2="391.9" stroke="#7a7a7a" stroke-width="1.3"/><line x1="13" y1="416.3" x2="16.5" y2="416.3" stroke="#7a7a7a" stroke-width="1.3"/><line x1="10.5" y1="428.5" x2="19" y2="428.5" stroke="#6a6a6a" stroke-width="1.3"/><line x1="13" y1="440.6" x2="16.5" y2="440.6" stroke="#7a7a7a" stroke-width="1.3"/><text x="0" y="0" transform="translate(18 452.8) rotate(-90)" font-family="Liberation Sans" font-size="12.5" fill="#454545" text-anchor="middle">1</text><line x1="13" y1="465.0" x2="16.5" y2="465.0" stroke="#7a7a7a" stroke-width="1.3"/><line x1="10.5" y1="477.2" x2="19" y2="477.2" stroke="#6a6a6a" stroke-width="1.3"/><line x1="13" y1="489.3" x2="16.5" y2="489.3" stroke="#7a7a7a" stroke-width="1.3"/><text x="0" y="0" transform="translate(18 501.5) rotate(-90)" font-family="Liberation Sans" font-size="12.5" fill="#454545" text-anchor="middle">2</text><line x1="13" y1="513.7" x2="16.5" y2="513.7" stroke="#7a7a7a" stroke-width="1.3"/><line x1="10.5" y1="525.9" x2="19" y2="525.9" stroke="#6a6a6a" stroke-width="1.3"/><line x1="13" y1="538.0" x2="16.5" y2="538.0" stroke="#7a7a7a" stroke-width="1.3"/><text x="0" y="0" transform="translate(18 550.3) rotate(-90)" font-family="Liberation Sans" font-size="12.5" fill="#454545" text-anchor="middle">3</text><line x1="13" y1="562.4" x2="16.5" y2="562.4" stroke="#7a7a7a" stroke-width="1.3"/><line x1="10.5" y1="574.6" x2="19" y2="574.6" stroke="#6a6a6a" stroke-width="1.3"/><line x1="13" y1="586.7" x2="16.5" y2="586.7" stroke="#7a7a7a" stroke-width="1.3"/><text x="0" y="0" transform="translate(18 598.5) rotate(-90)" font-family="Liberation Sans" font-size="12.5" fill="#454545" text-anchor="middle">4</text><line x1="13" y1="611.1" x2="16.5" y2="611.1" stroke="#7a7a7a" stroke-width="1.3"/><line x1="10.5" y1="623.2" x2="19" y2="623.2" stroke="#6a6a6a" stroke-width="1.3"/><line x1="13" y1="635.4" x2="16.5" y2="635.4" stroke="#7a7a7a" stroke-width="1.3"/><text x="0" y="0" transform="translate(18 648.4) rotate(-90)" font-family="Liberation Sans" font-size="12.5" fill="#454545" text-anchor="middle">5</text><line x1="13" y1="659.8" x2="16.5" y2="659.8" stroke="#7a7a7a" stroke-width="1.3"/><line x1="10.5" y1="672.0" x2="19" y2="672.0" stroke="#6a6a6a" stroke-width="1.3"/><line x1="13" y1="684.1" x2="16.5" y2="684.1" stroke="#7a7a7a" stroke-width="1.3"/><text x="0" y="0" transform="translate(18 697.2) rotate(-90)" font-family="Liberation Sans" font-size="12.5" fill="#454545" text-anchor="middle">6</text><line x1="13" y1="708.5" x2="16.5" y2="708.5" stroke="#7a7a7a" stroke-width="1.3"/><line x1="10.5" y1="720.7" x2="19" y2="720.7" stroke="#6a6a6a" stroke-width="1.3"/><line x1="13" y1="732.8" x2="16.5" y2="732.8" stroke="#7a7a7a" stroke-width="1.3"/><text x="0" y="0" transform="translate(18 744.9) rotate(-90)" font-family="Liberation Sans" font-size="12.5" fill="#454545" text-anchor="middle">7</text><line x1="13" y1="757.2" x2="16.5" y2="757.2" stroke="#7a7a7a" stroke-width="1.3"/><line x1="10.5" y1="769.4" x2="19" y2="769.4" stroke="#6a6a6a" stroke-width="1.3"/><line x1="13" y1="781.5" x2="16.5" y2="781.5" stroke="#7a7a7a" stroke-width="1.3"/><text x="0" y="0" transform="translate(18 793.6) rotate(-90)" font-family="Liberation Sans" font-size="12.5" fill="#454545" text-anchor="middle">8</text><line x1="13" y1="805.9" x2="16.5" y2="805.9" stroke="#7a7a7a" stroke-width="1.3"/><line x1="10.5" y1="818.1" x2="19" y2="818.1" stroke="#6a6a6a" stroke-width="1.3"/><line x1="13" y1="830.2" x2="16.5" y2="830.2" stroke="#7a7a7a" stroke-width="1.3"/><text x="0" y="0" transform="translate(18 843.2) rotate(-90)" font-family="Liberation Sans" font-size="12.5" fill="#454545" text-anchor="middle">9</text><line x1="13" y1="854.6" x2="16.5" y2="854.6" stroke="#7a7a7a" stroke-width="1.3"/><line x1="10.5" y1="866.8" x2="19" y2="866.8" stroke="#6a6a6a" stroke-width="1.3"/><line x1="13" y1="878.9" x2="16.5" y2="878.9" stroke="#7a7a7a" stroke-width="1.3"/><text x="0" y="0" transform="translate(18 890.5) rotate(-90)" font-family="Liberation Sans" font-size="12.5" fill="#454545" text-anchor="middle">0</text><line x1="13" y1="903.3" x2="16.5" y2="903.3" stroke="#7a7a7a" stroke-width="1.3"/><line x1="10.5" y1="915.5" x2="19" y2="915.5" stroke="#6a6a6a" stroke-width="1.3"/><line x1="13" y1="927.6" x2="16.5" y2="927.6" stroke="#7a7a7a" stroke-width="1.3"/><text x="0" y="0" transform="translate(18 937.5) rotate(-90)" font-family="Liberation Sans" font-size="12.5" fill="#454545" text-anchor="middle">1</text></svg><div style="position:absolute;left:317px;top:281px;width:1023px;height:662px;background:#fff;border-left:1px solid #C6CCC0;border-top:1px solid #C6CCC0;border-right:1px solid #D6D6D6;box-sizing:border-box;"></div><div style="position:absolute;left:1629px;top:259px;width:21px;height:683px;background:#F3F4F6;"></div><svg style="position:absolute;left:1633px;top:265px;" width="13" height="9" viewBox="0 0 13 9"><path d="M6.5 0.5 L12.5 8.5 H0.5 Z" fill="#6E6E6E" stroke="#6E6E6E" stroke-linejoin="round"/></svg><div style="position:absolute;left:1634.5px;top:281px;width:10.5px;height:291px;background:#707070;border-radius:5px;"></div><svg style="position:absolute;left:1633px;top:924px;" width="13" height="9" viewBox="0 0 13 9"><path d="M0.5 0.5 H12.5 L6.5 8.5 Z" fill="#6E6E6E" stroke="#6E6E6E" stroke-linejoin="round"/></svg><div style="position:absolute;left:0px;top:942px;width:1650px;height:27px;background:#F0F0F0;border-top:1px solid #DADADA;box-sizing:border-box;"></div><div style="position:absolute;left:0px;top:968px;width:1650px;height:1px;background:#0a0a0a;"></div><div class="t" style="left:12.93px;top:950px;font-size:13px;color:#3f3f3f;letter-spacing:-0.001px;">Page 1 of 1</div><div class="t" style="left:104.05px;top:950px;font-size:13px;color:#3f3f3f;letter-spacing:0.522px;">75 words</div><svg style="position:absolute;left:184px;top:947px;" width="21" height="19" viewBox="0 0 21 19"><path d="M8 16.8 H1.5 V1.5 H8 Q10 1.5 10 3.5 V7 M10 3.5 Q10 1.5 12 1.5 H17.8 V7.8 M10 11.5 V14.8 Q10 16.8 8 16.8" fill="none" stroke="#2f2f2f" stroke-width="1.6"/><path d="M10.8 9.6 L18.8 17.8 M18.8 9.6 L10.8 17.8" stroke="#2f2f2f" stroke-width="1.3"/></svg><div class="t" style="left:224.43px;top:950px;font-size:13px;color:#3f3f3f;letter-spacing:0.1px;">English (United States)</div><div class="t" style="left:382.01px;top:950px;font-size:13px;color:#3f3f3f;letter-spacing:-0.001px;">Text Predictions: On</div><svg style="position:absolute;left:522px;top:947px;" width="21" height="19" viewBox="0 0 21 19"><path d="M6.5 16.5 H1.6 V2.4 H19.6 V6.5" fill="none" stroke="#2a2a2a" stroke-width="1.4"/><line x1="1.6" y1="3" x2="19.6" y2="3" stroke="#2a2a2a" stroke-width="1.6"/><line x1="3.5" y1="6.8" x2="6" y2="6.8" stroke="#2a2a2a" stroke-width="1.3"/><line x1="3.5" y1="9.9" x2="5.5" y2="9.9" stroke="#2a2a2a" stroke-width="1.3"/><line x1="3.5" y1="13" x2="5.5" y2="13" stroke="#2a2a2a" stroke-width="1.3"/><circle cx="14" cy="12" r="4.9" fill="none" stroke="#2a2a2a" stroke-width="1.5"/><circle cx="14" cy="12" r="2.1" fill="#1a1a1a"/></svg><svg style="position:absolute;left:563px;top:946px;" width="21" height="20" viewBox="0 0 21 20"><circle cx="8.4" cy="4" r="2.2" fill="none" stroke="#2a2a2a" stroke-width="1.4"/><path d="M1.2 5.3 Q1.6 9.2 5.5 9.2 H11.3 Q15 9.2 15.2 6.2" fill="none" stroke="#2a2a2a" stroke-width="1.5"/><path d="M5.5 9.2 Q6.8 13 5.4 16.3 Q4.7 18.4 6.3 18.5" fill="none" stroke="#2a2a2a" stroke-width="1.5"/><path d="M11.3 9.2 Q10.8 11.2 11.3 13.3" fill="none" stroke="#2a2a2a" stroke-width="1.5"/><path d="M10.2 15.2 L12.6 17.9 L18.6 11.3" fill="none" stroke="#2a2a2a" stroke-width="1.5"/></svg><div class="t" style="left:585.97px;top:950px;font-size:13px;color:#3f3f3f;letter-spacing:0.142px;">Accessibility: Good to go</div><svg style="position:absolute;left:1195px;top:947px;" width="21" height="19" viewBox="0 0 21 19"><path d="M1 5 V1 H5 M16 1 H20 V5 M20 14 V18 H16 M5 18 H1 V14" fill="none" stroke="#333" stroke-width="1.3"/><path d="M5.5 3.5 H12 L15.5 7 V15.5 H5.5 Z" fill="none" stroke="#333" stroke-width="1.3"/><path d="M12 3.5 V7 H15.5" fill="none" stroke="#333" stroke-width="1.1"/></svg><div class="t" style="left:1217.43px;top:950px;font-size:13px;color:#3f3f3f;letter-spacing:0.059px;">Focus</div><svg style="position:absolute;left:1283px;top:947px;" width="19" height="17" viewBox="0 0 19 17"><path d="M1 2 H6.5 Q9 2 9.5 4 Q10 2 12.5 2 H18 V15 H12 Q10 15 9.5 16.5 Q9 15 7 15 H1 Z" fill="none" stroke="#333" stroke-width="1.3"/><line x1="9.5" y1="4" x2="9.5" y2="16" stroke="#333" stroke-width="1.2"/><line x1="3" y1="6" x2="7.5" y2="6" stroke="#333" stroke-width="1"/><line x1="3" y1="9" x2="7.5" y2="9" stroke="#333" stroke-width="1"/><line x1="3" y1="12" x2="7.5" y2="12" stroke="#333" stroke-width="1"/><line x1="11.5" y1="6" x2="16" y2="6" stroke="#333" stroke-width="1"/><line x1="11.5" y1="9" x2="16" y2="9" stroke="#333" stroke-width="1"/><line x1="11.5" y1="12" x2="16" y2="12" stroke="#333" stroke-width="1"/></svg><div style="position:absolute;left:1319px;top:943px;width:50px;height:24px;background:#E0E0E0;"></div><svg style="position:absolute;left:1336px;top:946px;" width="16" height="20" viewBox="0 0 16 20"><rect x="1" y="1" width="14" height="18" fill="none" stroke="#333" stroke-width="1.4"/><line x1="3.5" y1="5" x2="12.5" y2="5" stroke="#333" stroke-width="1.1"/><line x1="3.5" y1="8" x2="12.5" y2="8" stroke="#333" stroke-width="1.1"/><line x1="3.5" y1="11" x2="12.5" y2="11" stroke="#333" stroke-width="1.1"/><line x1="3.5" y1="14" x2="12.5" y2="14" stroke="#333" stroke-width="1.1"/></svg><svg style="position:absolute;left:1386px;top:946px;" width="21" height="20" viewBox="0 0 21 20"><path d="M8 18 H1 V1 H15 V7" fill="none" stroke="#333" stroke-width="1.3"/><line x1="1" y1="4" x2="15" y2="4" stroke="#333" stroke-width="1.1"/><line x1="3.5" y1="7.5" x2="9" y2="7.5" stroke="#333" stroke-width="1"/><line x1="3.5" y1="10.5" x2="7" y2="10.5" stroke="#333" stroke-width="1"/><line x1="3.5" y1="13.5" x2="7" y2="13.5" stroke="#333" stroke-width="1"/><circle cx="14.5" cy="14" r="5.5" fill="#F0F0F0" stroke="#333" stroke-width="1.3"/><ellipse cx="14.5" cy="14" rx="2.3" ry="5.5" fill="none" stroke="#333" stroke-width="1"/><line x1="9" y1="14" x2="20" y2="14" stroke="#333" stroke-width="1"/></svg><div style="position:absolute;left:1429px;top:955px;width:9px;height:1.3px;background:#555;"></div><div style="position:absolute;left:1445px;top:955px;width:128px;height:1.5px;background:#6a6a6a;"></div><div style="position:absolute;left:1506px;top:948px;width:7.5px;height:16px;background:#6a6a6a;border-radius:1.5px;"></div><svg style="position:absolute;left:1579px;top:950px;" width="12" height="12" viewBox="0 0 12 12"><path d="M6 0.5 V11.5 M0.5 6 H11.5" stroke="#555" stroke-width="1.3"/></svg><div class="t" style="left:1606.33px;top:950px;font-size:13px;color:#3f3f3f;letter-spacing:0.294px;">100%</div><svg style="position:absolute;left:421px;top:385px;" width="20" height="20" viewBox="0 0 20 20"><rect x="0.7" y="0.7" width="18.6" height="18.6" fill="#fff" stroke="#A0A0A0" stroke-width="1.3"/><path d="M10 3 V17 M3 10 H17" stroke="#333" stroke-width="1.2"/><path d="M10 2.5 L8 5 H12 Z M10 17.5 L8 15 H12 Z M2.5 10 L5 8 V12 Z M17.5 10 L15 8 V12 Z" fill="#333"/></svg><div style="position:absolute;left:440.75px;top:404.75px;width:776.5px;height:1.5px;background:#1f1f1f;"></div><div style="position:absolute;left:440.75px;top:438.05px;width:776.5px;height:1.5px;background:#1f1f1f;"></div><div style="position:absolute;left:440.75px;top:503.65px;width:776.5px;height:1.5px;background:#1f1f1f;"></div><div style="position:absolute;left:440.75px;top:536.75px;width:776.5px;height:1.5px;background:#1f1f1f;"></div><div style="position:absolute;left:440.75px;top:569.65px;width:776.5px;height:1.5px;background:#1f1f1f;"></div><div style="position:absolute;left:440.75px;top:602.95px;width:776.5px;height:1.5px;background:#1f1f1f;"></div><div style="position:absolute;left:440.75px;top:635.95px;width:776.5px;height:1.5px;background:#1f1f1f;"></div><div style="position:absolute;left:440.75px;top:669.65px;width:776.5px;height:1.5px;background:#1f1f1f;"></div><div style="position:absolute;left:440.75px;top:833.65px;width:776.5px;height:1.5px;background:#1f1f1f;"></div><div style="position:absolute;left:440.75px;top:898.65px;width:776.5px;height:1.5px;background:#1f1f1f;"></div><div style="position:absolute;left:440.75px;top:404.75px;width:1.5px;height:495.4px;background:#1f1f1f;"></div><div style="position:absolute;left:827.75px;top:404.75px;width:1.5px;height:495.4px;background:#1f1f1f;"></div><div style="position:absolute;left:1215.75px;top:404.75px;width:1.5px;height:495.4px;background:#1f1f1f;"></div><div class="t" style="left:449.96px;top:410px;font-size:17px;color:#1b1b1b;transform:scaleX(1.0990);transform-origin:0 0;-webkit-text-stroke:0.2px currentColor;">Name</div><div class="t" style="left:451.45px;top:443px;font-size:17px;color:#1b1b1b;transform:scaleX(1.0598);transform-origin:0 0;-webkit-text-stroke:0.2px currentColor;">Address</div><div class="t" style="left:449.96px;top:509px;font-size:17px;color:#1b1b1b;transform:scaleX(1.0948);transform-origin:0 0;-webkit-text-stroke:0.2px currentColor;">Birth Date</div><div class="t" style="left:449.93px;top:542px;font-size:17px;color:#1b1b1b;transform:scaleX(1.1164);transform-origin:0 0;-webkit-text-stroke:0.2px currentColor;">Email</div><div class="t" style="left:449.98px;top:575px;font-size:17px;color:#1b1b1b;transform:scaleX(1.0850);transform-origin:0 0;-webkit-text-stroke:0.2px currentColor;">Phone</div><div class="t" style="left:449.98px;top:608px;font-size:17px;color:#1b1b1b;transform:scaleX(1.0819);transform-origin:0 0;-webkit-text-stroke:0.2px currentColor;">Position Applied For</div><div class="t" style="left:451.45px;top:641px;font-size:17px;color:#1b1b1b;transform:scaleX(1.0659);transform-origin:0 0;-webkit-text-stroke:0.2px currentColor;">Available Start Date</div><div class="t" style="left:450.68px;top:675px;font-size:17px;color:#1b1b1b;transform:scaleX(1.0694);transform-origin:0 0;-webkit-text-stroke:0.2px currentColor;">Skills Check List</div><div class="t" style="left:451.41px;top:839px;font-size:17px;color:#1b1b1b;transform:scaleX(1.0188);transform-origin:0 0;-webkit-text-stroke:0.2px currentColor;">Why Do You Want This Job?</div><div style="position:absolute;left:838px;top:413.5px"><svg width="31" height="22.5" viewBox="0 0 31 22.5" style="flex:none;display:block"><path d="M4.5 0.8 H30.2 Q25.0 11.2 30.2 21.7 H4.5 Q-1.5 11.2 4.5 0.8 Z" fill="#FAFBFC" stroke="#A8ABAE" stroke-width="1.6"/><circle cx="8" cy="11.2" r="0.7" fill="#B9BCC0"/><line x1="10" y1="8.8" x2="10" y2="13.8" stroke="#C4C7CA" stroke-width="0.9"/></svg></div><div class="t" style="left:870.31px;top:419px;font-size:17px;color:#1b1b1b;transform:scaleX(1.0626);transform-origin:0 0;-webkit-text-stroke:0.2px currentColor;">Write as Name, Surname</div><div style="position:absolute;left:1072px;top:413.5px"><svg width="31.5" height="22.5" viewBox="0 0 31.5 22.5" style="flex:none;display:block"><path d="M0.8 0.8 H27.0 Q33.0 11.2 27.0 21.7 H0.8 Q6.0 11.2 0.8 0.8 Z" fill="#FAFBFC" stroke="#A8ABAE" stroke-width="1.6"/><line x1="19.5" y1="8.8" x2="19.5" y2="13.8" stroke="#C4C7CA" stroke-width="0.9"/><circle cx="21.5" cy="11.2" r="0.7" fill="#B9BCC0"/></svg></div><div style="position:absolute;left:838px;top:447.5px"><svg width="31" height="22.5" viewBox="0 0 31 22.5" style="flex:none;display:block"><path d="M4.5 0.8 H30.2 Q25.0 11.2 30.2 21.7 H4.5 Q-1.5 11.2 4.5 0.8 Z" fill="#FAFBFC" stroke="#A8ABAE" stroke-width="1.6"/><circle cx="8" cy="11.2" r="0.7" fill="#B9BCC0"/><line x1="10" y1="8.8" x2="10" y2="13.8" stroke="#C4C7CA" stroke-width="0.9"/></svg></div><div class="t" style="left:869.41px;top:453px;font-size:17px;color:#6b6b6b;transform:scaleX(1.0651);transform-origin:0 0;-webkit-text-stroke:0.2px currentColor;">Enter the full address with the ZIP</div><div class="t" style="left:838.19px;top:484px;font-size:17px;color:#6b6b6b;transform:scaleX(1.1192);transform-origin:0 0;-webkit-text-stroke:0.2px currentColor;">code.</div><div style="position:absolute;left:883.6px;top:478.8px"><svg width="31.5" height="22.5" viewBox="0 0 31.5 22.5" style="flex:none;display:block"><path d="M0.8 0.8 H27.0 Q33.0 11.2 27.0 21.7 H0.8 Q6.0 11.2 0.8 0.8 Z" fill="#FAFBFC" stroke="#A8ABAE" stroke-width="1.6"/><line x1="19.5" y1="8.8" x2="19.5" y2="13.8" stroke="#C4C7CA" stroke-width="0.9"/><circle cx="21.5" cy="11.2" r="0.7" fill="#B9BCC0"/></svg></div><div style="position:absolute;left:838px;top:512.3px"><svg width="31" height="22.5" viewBox="0 0 31 22.5" style="flex:none;display:block"><path d="M4.5 0.8 H30.2 Q25.0 11.2 30.2 21.7 H4.5 Q-1.5 11.2 4.5 0.8 Z" fill="#FAFBFC" stroke="#A8ABAE" stroke-width="1.6"/><circle cx="8" cy="11.2" r="0.7" fill="#B9BCC0"/><line x1="10" y1="8.8" x2="10" y2="13.8" stroke="#C4C7CA" stroke-width="0.9"/></svg></div><div class="t" style="left:869.51px;top:518px;font-size:17px;color:#6b6b6b;transform:scaleX(1.0585);transform-origin:0 0;-webkit-text-stroke:0.2px currentColor;">Use the Date Picker.</div><div style="position:absolute;left:1032.5px;top:512.3px"><svg width="31.5" height="22.5" viewBox="0 0 31.5 22.5" style="flex:none;display:block"><path d="M0.8 0.8 H27.0 Q33.0 11.2 27.0 21.7 H0.8 Q6.0 11.2 0.8 0.8 Z" fill="#FAFBFC" stroke="#A8ABAE" stroke-width="1.6"/><line x1="19.5" y1="8.8" x2="19.5" y2="13.8" stroke="#C4C7CA" stroke-width="0.9"/><circle cx="21.5" cy="11.2" r="0.7" fill="#B9BCC0"/></svg></div><div style="position:absolute;left:838px;top:545.7px"><svg width="31" height="22.5" viewBox="0 0 31 22.5" style="flex:none;display:block"><path d="M4.5 0.8 H30.2 Q25.0 11.2 30.2 21.7 H4.5 Q-1.5 11.2 4.5 0.8 Z" fill="#FAFBFC" stroke="#A8ABAE" stroke-width="1.6"/><circle cx="8" cy="11.2" r="0.7" fill="#B9BCC0"/><line x1="10" y1="8.8" x2="10" y2="13.8" stroke="#C4C7CA" stroke-width="0.9"/></svg></div><div class="t" style="left:869.41px;top:551px;font-size:17px;color:#6b6b6b;transform:scaleX(1.0620);transform-origin:0 0;-webkit-text-stroke:0.2px currentColor;">Please provide a Gmail address.</div><div style="position:absolute;left:1129.2px;top:545.7px"><svg width="31.5" height="22.5" viewBox="0 0 31.5 22.5" style="flex:none;display:block"><path d="M0.8 0.8 H27.0 Q33.0 11.2 27.0 21.7 H0.8 Q6.0 11.2 0.8 0.8 Z" fill="#FAFBFC" stroke="#A8ABAE" stroke-width="1.6"/><line x1="19.5" y1="8.8" x2="19.5" y2="13.8" stroke="#C4C7CA" stroke-width="0.9"/><circle cx="21.5" cy="11.2" r="0.7" fill="#B9BCC0"/></svg></div><div style="position:absolute;left:838px;top:578.3px"><svg width="31" height="22.5" viewBox="0 0 31 22.5" style="flex:none;display:block"><path d="M4.5 0.8 H30.2 Q25.0 11.2 30.2 21.7 H4.5 Q-1.5 11.2 4.5 0.8 Z" fill="#FAFBFC" stroke="#A8ABAE" stroke-width="1.6"/><circle cx="8" cy="11.2" r="0.7" fill="#B9BCC0"/><line x1="10" y1="8.8" x2="10" y2="13.8" stroke="#C4C7CA" stroke-width="0.9"/></svg></div><div class="t" style="left:869.39px;top:584px;font-size:17px;color:#6b6b6b;transform:scaleX(1.0756);transform-origin:0 0;-webkit-text-stroke:0.2px currentColor;">Please include area dialing code .</div><div style="position:absolute;left:1141.2px;top:578.3px"><svg width="31.5" height="22.5" viewBox="0 0 31.5 22.5" style="flex:none;display:block"><path d="M0.8 0.8 H27.0 Q33.0 11.2 27.0 21.7 H0.8 Q6.0 11.2 0.8 0.8 Z" fill="#FAFBFC" stroke="#A8ABAE" stroke-width="1.6"/><line x1="19.5" y1="8.8" x2="19.5" y2="13.8" stroke="#C4C7CA" stroke-width="0.9"/><circle cx="21.5" cy="11.2" r="0.7" fill="#B9BCC0"/></svg></div><div style="position:absolute;left:838px;top:612.6px"><svg width="31" height="22.5" viewBox="0 0 31 22.5" style="flex:none;display:block"><path d="M4.5 0.8 H30.2 Q25.0 11.2 30.2 21.7 H4.5 Q-1.5 11.2 4.5 0.8 Z" fill="#FAFBFC" stroke="#A8ABAE" stroke-width="1.6"/><circle cx="8" cy="11.2" r="0.7" fill="#B9BCC0"/><line x1="10" y1="8.8" x2="10" y2="13.8" stroke="#C4C7CA" stroke-width="0.9"/></svg></div><div class="t" style="left:869.57px;top:618px;font-size:17px;color:#6b6b6b;transform:scaleX(1.0882);transform-origin:0 0;-webkit-text-stroke:0.2px currentColor;">Choose only one position.</div><div style="position:absolute;left:1080.8px;top:612.6px"><svg width="31.5" height="22.5" viewBox="0 0 31.5 22.5" style="flex:none;display:block"><path d="M0.8 0.8 H27.0 Q33.0 11.2 27.0 21.7 H0.8 Q6.0 11.2 0.8 0.8 Z" fill="#FAFBFC" stroke="#A8ABAE" stroke-width="1.6"/><line x1="19.5" y1="8.8" x2="19.5" y2="13.8" stroke="#C4C7CA" stroke-width="0.9"/><circle cx="21.5" cy="11.2" r="0.7" fill="#B9BCC0"/></svg></div><div style="position:absolute;left:838px;top:646.0px"><svg width="31" height="22.5" viewBox="0 0 31 22.5" style="flex:none;display:block"><path d="M4.5 0.8 H30.2 Q25.0 11.2 30.2 21.7 H4.5 Q-1.5 11.2 4.5 0.8 Z" fill="#FAFBFC" stroke="#A8ABAE" stroke-width="1.6"/><circle cx="8" cy="11.2" r="0.7" fill="#B9BCC0"/><line x1="10" y1="8.8" x2="10" y2="13.8" stroke="#C4C7CA" stroke-width="0.9"/></svg></div><div class="t" style="left:869.51px;top:651px;font-size:17px;color:#6b6b6b;transform:scaleX(1.0585);transform-origin:0 0;-webkit-text-stroke:0.2px currentColor;">Use the Date Picker.</div><div style="position:absolute;left:1032px;top:646.0px"><svg width="31.5" height="22.5" viewBox="0 0 31.5 22.5" style="flex:none;display:block"><path d="M0.8 0.8 H27.0 Q33.0 11.2 27.0 21.7 H0.8 Q6.0 11.2 0.8 0.8 Z" fill="#FAFBFC" stroke="#A8ABAE" stroke-width="1.6"/><line x1="19.5" y1="8.8" x2="19.5" y2="13.8" stroke="#C4C7CA" stroke-width="0.9"/><circle cx="21.5" cy="11.2" r="0.7" fill="#B9BCC0"/></svg></div><div style="position:absolute;left:1091px;top:600.5px;width:50px;height:1.2px;background:#4A6FD0;"></div><div style="position:absolute;left:838px;top:678.8px"><svg width="31" height="22.5" viewBox="0 0 31 22.5" style="flex:none;display:block"><path d="M4.5 0.8 H30.2 Q25.0 11.2 30.2 21.7 H4.5 Q-1.5 11.2 4.5 0.8 Z" fill="#E7ECF3" stroke="#B3B8BF" stroke-width="1.6"/></svg></div><svg style="position:absolute;left:872.6px;top:685px;" width="15" height="15" viewBox="0 0 15 15"><rect x="0.75" y="0.75" width="13.5" height="13.5" fill="#fff" stroke="#2a2a2a" stroke-width="1.3"/><path d="M1.5 1.5 L13.5 13.5 M13.5 1.5 L1.5 13.5" stroke="#2a2a2a" stroke-width="1.2"/></svg><div style="position:absolute;left:888.8px;top:678.8px"><svg width="17" height="22.5" viewBox="0 0 17 22.5" style="flex:none;display:block"><path d="M0.8 0.8 H12.5 Q18.5 11.2 12.5 21.7 H0.8 Q6.0 11.2 0.8 0.8 Z" fill="#E7ECF3" stroke="#B3B8BF" stroke-width="1.6"/></svg></div><div class="t" style="left:908.88px;top:684px;font-size:17px;color:#1b1b1b;transform:scaleX(1.0781);transform-origin:0 0;-webkit-text-stroke:0.2px currentColor;">Grammar</div><div style="position:absolute;left:838px;top:711.3px"><svg width="31" height="22.5" viewBox="0 0 31 22.5" style="flex:none;display:block"><path d="M4.5 0.8 H30.2 Q25.0 11.2 30.2 21.7 H4.5 Q-1.5 11.2 4.5 0.8 Z" fill="#E7ECF3" stroke="#B3B8BF" stroke-width="1.6"/></svg></div><svg style="position:absolute;left:872.6px;top:717.5px;" width="15" height="15" viewBox="0 0 15 15"><rect x="0.75" y="0.75" width="13.5" height="13.5" fill="#fff" stroke="#2a2a2a" stroke-width="1.3"/><path d="M1.5 1.5 L13.5 13.5 M13.5 1.5 L1.5 13.5" stroke="#2a2a2a" stroke-width="1.2"/></svg><div style="position:absolute;left:888.8px;top:711.3px"><svg width="17" height="22.5" viewBox="0 0 17 22.5" style="flex:none;display:block"><path d="M0.8 0.8 H12.5 Q18.5 11.2 12.5 21.7 H0.8 Q6.0 11.2 0.8 0.8 Z" fill="#E7ECF3" stroke="#B3B8BF" stroke-width="1.6"/></svg></div><div class="t" style="left:909.71px;top:716px;font-size:17px;color:#1b1b1b;transform:scaleX(1.0531);transform-origin:0 0;-webkit-text-stroke:0.2px currentColor;">WordPress</div><div style="position:absolute;left:838px;top:743.8px"><svg width="31" height="22.5" viewBox="0 0 31 22.5" style="flex:none;display:block"><path d="M4.5 0.8 H30.2 Q25.0 11.2 30.2 21.7 H4.5 Q-1.5 11.2 4.5 0.8 Z" fill="#E7ECF3" stroke="#B3B8BF" stroke-width="1.6"/></svg></div><svg style="position:absolute;left:872.6px;top:750px;" width="15" height="15" viewBox="0 0 15 15"><rect x="0.75" y="0.75" width="13.5" height="13.5" fill="#fff" stroke="#2a2a2a" stroke-width="1.3"/></svg><div style="position:absolute;left:888.8px;top:743.8px"><svg width="17" height="22.5" viewBox="0 0 17 22.5" style="flex:none;display:block"><path d="M0.8 0.8 H12.5 Q18.5 11.2 12.5 21.7 H0.8 Q6.0 11.2 0.8 0.8 Z" fill="#E7ECF3" stroke="#B3B8BF" stroke-width="1.6"/></svg></div><div class="t" style="left:908.11px;top:749px;font-size:17px;color:#1b1b1b;transform:scaleX(1.0748);transform-origin:0 0;-webkit-text-stroke:0.2px currentColor;">Image Editing</div><div style="position:absolute;left:838px;top:776.2px"><svg width="31" height="22.5" viewBox="0 0 31 22.5" style="flex:none;display:block"><path d="M4.5 0.8 H30.2 Q25.0 11.2 30.2 21.7 H4.5 Q-1.5 11.2 4.5 0.8 Z" fill="#E7ECF3" stroke="#B3B8BF" stroke-width="1.6"/></svg></div><svg style="position:absolute;left:872.6px;top:782.4px;" width="15" height="15" viewBox="0 0 15 15"><rect x="0.75" y="0.75" width="13.5" height="13.5" fill="#fff" stroke="#2a2a2a" stroke-width="1.3"/></svg><div style="position:absolute;left:888.8px;top:776.2px"><svg width="17" height="22.5" viewBox="0 0 17 22.5" style="flex:none;display:block"><path d="M0.8 0.8 H12.5 Q18.5 11.2 12.5 21.7 H0.8 Q6.0 11.2 0.8 0.8 Z" fill="#E7ECF3" stroke="#B3B8BF" stroke-width="1.6"/></svg></div><div class="t" style="left:908.35px;top:781px;font-size:17px;color:#1b1b1b;transform:scaleX(1.0327);transform-origin:0 0;-webkit-text-stroke:0.2px currentColor;">Basic SEO</div><div style="position:absolute;left:838px;top:809.1px"><svg width="31" height="22.5" viewBox="0 0 31 22.5" style="flex:none;display:block"><path d="M4.5 0.8 H30.2 Q25.0 11.2 30.2 21.7 H4.5 Q-1.5 11.2 4.5 0.8 Z" fill="#E7ECF3" stroke="#B3B8BF" stroke-width="1.6"/></svg></div><svg style="position:absolute;left:872.6px;top:815.3px;" width="15" height="15" viewBox="0 0 15 15"><rect x="0.75" y="0.75" width="13.5" height="13.5" fill="#fff" stroke="#2a2a2a" stroke-width="1.3"/></svg><div style="position:absolute;left:888.8px;top:809.1px"><svg width="17" height="22.5" viewBox="0 0 17 22.5" style="flex:none;display:block"><path d="M0.8 0.8 H12.5 Q18.5 11.2 12.5 21.7 H0.8 Q6.0 11.2 0.8 0.8 Z" fill="#E7ECF3" stroke="#B3B8BF" stroke-width="1.6"/></svg></div><div class="t" style="left:908.33px;top:814px;font-size:17px;color:#1b1b1b;transform:scaleX(1.0462);transform-origin:0 0;-webkit-text-stroke:0.2px currentColor;">Basic HTML</div><div style="position:absolute;left:835px;top:833.8px;width:381px;height:1.3px;background:#fff;"></div><div style="position:absolute;left:835px;top:833.9px;width:381px;height:1.1px;background:#8E8E8E;"></div><div style="position:absolute;left:834.5px;top:834.4px;width:1px;height:65px;background:#A8A8A8;"></div><div style="position:absolute;left:1211.5px;top:834.4px;width:1px;height:65px;background:#A8A8A8;"></div><svg style="position:absolute;left:823px;top:835px;" width="12.5" height="18.5" viewBox="0 0 12.5 18.5"><rect x="0.5" y="0.5" width="11.5" height="17.5" fill="#E8E8E8" stroke="#9A9A9A" stroke-width="1"/><rect x="4" y="3" width="4.5" height="3" fill="#666"/><rect x="4" y="8" width="4.5" height="3" fill="#666"/><rect x="4" y="13" width="4.5" height="3" fill="#666"/></svg><div style="position:absolute;left:838px;top:843.1px"><svg width="31" height="22.5" viewBox="0 0 31 22.5" style="flex:none;display:block"><path d="M4.5 0.8 H30.2 Q25.0 11.2 30.2 21.7 H4.5 Q-1.5 11.2 4.5 0.8 Z" fill="#FAFBFC" stroke="#A8ABAE" stroke-width="1.6"/><circle cx="8" cy="11.2" r="0.7" fill="#B9BCC0"/><line x1="10" y1="8.8" x2="10" y2="13.8" stroke="#C4C7CA" stroke-width="0.9"/></svg></div><div style="position:absolute;left:870.5px;top:843.1px"><svg width="31" height="22.5" viewBox="0 0 31 22.5" style="flex:none;display:block"><path d="M4.5 0.8 H30.2 Q25.0 11.2 30.2 21.7 H4.5 Q-1.5 11.2 4.5 0.8 Z" fill="#FAFBFC" stroke="#A8ABAE" stroke-width="1.6"/><circle cx="8" cy="11.2" r="0.7" fill="#B9BCC0"/><line x1="10" y1="8.8" x2="10" y2="13.8" stroke="#C4C7CA" stroke-width="0.9"/></svg></div><div class="t" style="left:900.99px;top:848px;font-size:17px;color:#6b6b6b;transform:scaleX(1.0783);transform-origin:0 0;-webkit-text-stroke:0.2px currentColor;">Mention your reasons within 60</div><div class="t" style="left:838.85px;top:879px;font-size:17px;color:#6b6b6b;transform:scaleX(1.0952);transform-origin:0 0;-webkit-text-stroke:0.2px currentColor;">words.</div><div style="position:absolute;left:892px;top:874.0px"><svg width="32" height="22.5" viewBox="0 0 32 22.5" style="flex:none;display:block"><path d="M0.8 0.8 H27.5 Q33.5 11.2 27.5 21.7 H0.8 Q6.0 11.2 0.8 0.8 Z" fill="#FAFBFC" stroke="#A8ABAE" stroke-width="1.6"/><line x1="20.0" y1="8.8" x2="20.0" y2="13.8" stroke="#C4C7CA" stroke-width="0.9"/><circle cx="22.0" cy="11.2" r="0.7" fill="#B9BCC0"/></svg></div><div style="position:absolute;left:924px;top:874.0px"><svg width="32" height="22.5" viewBox="0 0 32 22.5" style="flex:none;display:block"><path d="M0.8 0.8 H27.5 Q33.5 11.2 27.5 21.7 H0.8 Q6.0 11.2 0.8 0.8 Z" fill="#FAFBFC" stroke="#A8ABAE" stroke-width="1.6"/><line x1="20.0" y1="8.8" x2="20.0" y2="13.8" stroke="#C4C7CA" stroke-width="0.9"/><circle cx="22.0" cy="11.2" r="0.7" fill="#B9BCC0"/></svg></div><div style="position:absolute;left:1217px;top:900.5px;width:19px;height:19px;border:1.3px solid #A0A0A0;box-sizing:border-box;"></div></body></html>
